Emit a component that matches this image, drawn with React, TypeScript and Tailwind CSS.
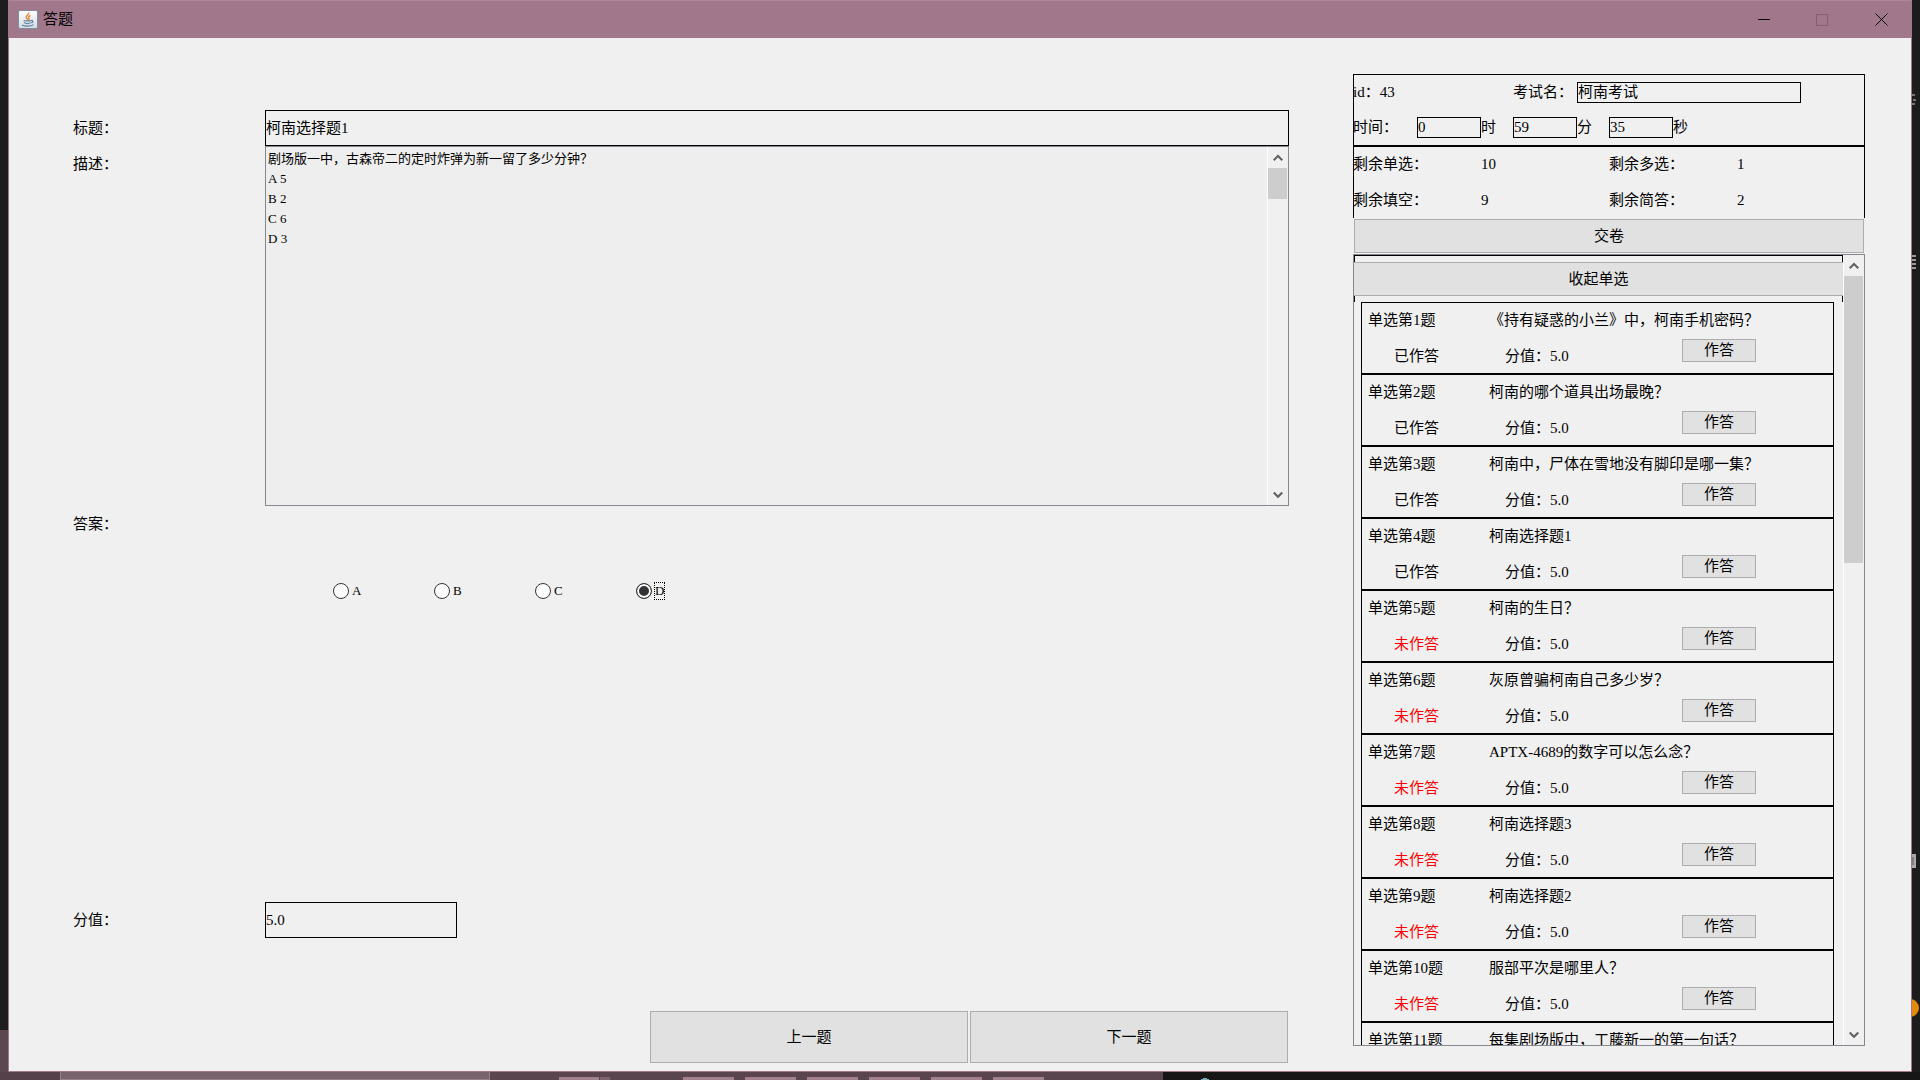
import React, { useState } from 'react';

const questions = [
  { title: '《持有疑惑的小兰》中，柯南手机密码？', done: true },
  { title: '柯南的哪个道具出场最晚？', done: true },
  { title: '柯南中，尸体在雪地没有脚印是哪一集？', done: true },
  { title: '柯南选择题1', done: true },
  { title: '柯南的生日？', done: false },
  { title: '灰原曾骗柯南自己多少岁？', done: false },
  { title: 'APTX-4689的数字可以怎么念？', done: false },
  { title: '柯南选择题3', done: false },
  { title: '柯南选择题2', done: false },
  { title: '服部平次是哪里人？', done: false },
  { title: '每集剧场版中，工藤新一的第一句话？', done: false }
];

const remaining = [
  { label: '剩余单选：', count: 10 },
  { label: '剩余多选：', count: 1 },
  { label: '剩余填空：', count: 9 },
  { label: '剩余简答：', count: 2 }
];

const description = `剧场版一中，古森帝二的定时炸弹为新一留了多少分钟？
A 5
B 2
C 6
D 3`;

const buttonStyle = 'border border-[#adadad] bg-[#e1e1e1]';

const JavaIcon = () => {
  return <svg width="20" height="20" viewBox="0 0 20 20" aria-hidden="true">
      <defs>
        <linearGradient id="cup" x1="0" y1="0" x2="0" y2="1">
          <stop offset="0" stopColor="#ffffff" />
          <stop offset="1" stopColor="#d3dde3" />
        </linearGradient>
      </defs>
      <rect x="0.5" y="0.5" width="19" height="18" rx="1.5" fill="url(#cup)" stroke="#7d8f9d" />
      <path d="M10.6 2.5c1 2-3 3-2.400 5 .3 1 1.300 1.500 1.500 2.300M12.500 5.500c-1.800.9-2.700 1.800-1.500 3 .5.600.1 1.200-.5 1.500" fill="none" stroke="#e8863a" strokeWidth="1.400" />
      <path d="M5.500 10.800h7.500M6 12.800c2 .8 5 .8 6.500 0M4 15c3 1.600 8.500 1.500 11.500-.2M13 10.500c2.300-.5 2.600 1.800.2 2.400" fill="none" stroke="#5f83a3" strokeWidth="1.200" />
    </svg>;
};

const Chevron = ({ down = false }: { down?: boolean }) => {
  return <svg width="10" height="8" viewBox="0 0 10 8" aria-hidden="true">
      <path d={down ? 'M0.700 1.500L5 5.800L9.300 1.500' : 'M0.700 6.300L5 2L9.300 6.300'} fill="none" stroke="#606060" strokeWidth="2" />
    </svg>;
};

const ScrollBar = ({ thumb }: { thumb: string }) => {
  return <div className="flex w-[21px] shrink-0 flex-col items-stretch border-l border-white bg-[#f0f0f0] pr-px">
      <button aria-label="向上滚动" className="flex h-[21px] shrink-0 items-center justify-center">
        <Chevron />
      </button>
      <div className="min-h-0 flex-1">
        <div className={`bg-[#cdcdcd] ${thumb}`} />
      </div>
      <button aria-label="向下滚动" className="flex h-[21px] shrink-0 items-center justify-center">
        <Chevron down />
      </button>
    </div>;
};

const TitleBar = () => {
  return <header className="flex h-[38px] shrink-0 items-center border-t border-[#ab8799] bg-[#a1788b] pl-[9px]">
      <JavaIcon />
      <h1 className="ml-[5px] flex-1 text-[15px]">答题</h1>
      <button aria-label="最小化" className="flex h-full w-[58px] items-center justify-center">
        <svg width="12" height="12"><path d="M0 5.500H12" stroke="#000" /></svg>
      </button>
      <button aria-label="最大化" disabled className="flex h-full w-[58px] items-center justify-center">
        <svg width="12" height="12"><rect x="0.500" y="0.500" width="11" height="11" fill="none" stroke="#855f73" /></svg>
      </button>
      <button aria-label="关闭" className="flex h-full w-[60px] items-center justify-center">
        <svg width="13" height="13"><path d="M0.500 0.500L12.500 12.500M12.500 0.500L0.500 12.500" stroke="#000" fill="none" /></svg>
      </button>
    </header>;
};

const QuestionForm = () => {
  const [answer, setAnswer] = useState('D');
  return <main className="flex min-w-0 flex-1 flex-col pt-[72px] pb-2">
      <div className="flex h-9 shrink-0">
        <label htmlFor="title" className="w-48 shrink-0 leading-9">标题：</label>
        <input id="title" readOnly defaultValue="柯南选择题1" className="min-w-0 flex-1 border border-black outline-none" />
      </div>
      <div className="flex h-[360px] shrink-0">
        <label htmlFor="description" className="w-48 shrink-0 leading-9">描述：</label>
        <div className="flex min-w-0 flex-1 border border-[#828790] bg-[#eeeeee]">
          <textarea id="description" readOnly defaultValue={description} className="min-w-0 flex-1 resize-none overflow-hidden px-0.5 py-0.5 text-[13px] leading-5 outline-none" />
          <ScrollBar thumb="h-[31px]" />
        </div>
      </div>
      <fieldset className="flex min-h-0 flex-1">
        <span className="w-48 shrink-0 leading-9">答案：</span>
        <div className="flex pt-[74px] pl-[68px]">
          {['A', 'B', 'C', 'D'].map(option => <label key={option} className="flex h-[22px] w-[101px] items-center gap-0.5 text-[13px]">
              <input type="radio" name="answer" checked={answer === option} onChange={() => setAnswer(option)} className="size-4 appearance-none rounded-full border border-[#333333] bg-white checked:bg-[#333333] checked:shadow-[inset_0_0_0_2px_white]" />
              <span className={answer === option ? 'border border-dotted border-black leading-4' : 'border border-transparent leading-4'}>{option}</span>
            </label>)}
        </div>
      </fieldset>
      <div className="flex h-9 shrink-0">
        <label htmlFor="score" className="w-48 shrink-0 leading-9">分值：</label>
        <input id="score" readOnly defaultValue="5.0" className="w-48 border border-black outline-none" />
      </div>
      <div className="mt-[73px] flex shrink-0 justify-end gap-0.5 pr-px">
        <button className={`h-[52px] w-[318px] ${buttonStyle}`}>上一题</button>
        <button className={`h-[52px] w-[318px] ${buttonStyle}`}>下一题</button>
      </div>
    </main>;
};

const TimeField = ({ id, value, unit }: { id: string; value: string; unit: string }) => {
  return <>
      <input id={id} readOnly defaultValue={value} className="col-span-2 h-[21px] min-w-0 border border-black outline-none" />
      <label htmlFor={id}>{unit}</label>
    </>;
};

const ExamInfo = () => {
  return <section className="shrink-0">
      <div className="h-[72px] border border-black">
        <div className="-mx-px grid h-[34px] grid-cols-16 items-center whitespace-nowrap">
          <span className="col-span-5">id：43</span>
          <label htmlFor="exam" className="col-span-2">考试名：</label>
          <input id="exam" readOnly defaultValue="柯南考试" className="col-span-7 h-[21px] min-w-0 border border-black outline-none" />
        </div>
        <div className="-mx-px grid h-9 grid-cols-16 items-center whitespace-nowrap">
          <span className="col-span-2">时间：</span>
          <TimeField id="hours" value="0" unit="时" />
          <TimeField id="minutes" value="59" unit="分" />
          <TimeField id="seconds" value="35" unit="秒" />
        </div>
      </div>
      <div className="border-x border-t border-black">
        <dl className="-mx-px grid h-[71px] grid-cols-4 leading-[34px]">
          {remaining.map(item => <React.Fragment key={item.label}>
              <dt>{item.label}</dt>
              <dd>{item.count}</dd>
            </React.Fragment>)}
        </dl>
      </div>
    </section>;
};

const QuestionList = () => {
  return <section className="flex min-h-0 flex-1 border border-[#828790]">
      <div className="min-w-0 flex-1 overflow-hidden">
        <div className="h-[47px] border-x border-t border-black py-1.5">
          <button className="-mx-px block h-[34px] w-[calc(100%+2px)] border-y border-[#adadad] bg-[#e1e1e1]">收起单选</button>
        </div>
        <ul className="mr-[9px] ml-[7px]">
          {questions.map((question, index) => <li key={index} className="h-[72px] border border-black whitespace-nowrap">
              <div className="flex h-[35px] pl-1.5 leading-[35px]">
                <span className="w-[121px]">单选第{index + 1}题</span>
                <span>{question.title}</span>
              </div>
              <div className="flex h-[35px] pl-8 leading-9">
                <span className={question.done ? 'w-[111px]' : 'w-[111px] text-[#ff0000]'}>{question.done ? '已作答' : '未作答'}</span>
                <span className="w-[177px]">分值：5.0</span>
                <button className={`mt-px flex h-[23px] w-[74px] justify-center leading-5 ${buttonStyle}`}>作答</button>
              </div>
            </li>)}
        </ul>
      </div>
      <ScrollBar thumb="h-[287px]" />
    </section>;
};

const App = () => {
  return <div className="relative flex h-screen flex-col overflow-hidden bg-[#1c1c1c] font-['Liberation_Serif','Noto_Sans_CJK_SC',serif] text-[15px] text-black">
      <div className="flex min-h-0 flex-1">
        <div className="flex w-2 shrink-0 flex-col">
          <div className="flex-1 bg-[#1d1d1d]" />
          <div className="h-[42px] bg-[#5c4750]" />
        </div>
        <div className="flex min-w-0 flex-1 flex-col border-x border-b border-[#a1788b] bg-[#f0f0f0]">
          <TitleBar />
          <div className="flex min-h-0 flex-1 gap-16 pr-[46px] pl-16">
            <QuestionForm />
            <aside className="flex w-[512px] shrink-0 flex-col pt-9 pb-[25px]">
              <ExamInfo />
              <button className={`m-px h-[34px] shrink-0 ${buttonStyle}`}>交卷</button>
              <QuestionList />
            </aside>
          </div>
        </div>
        {/* desktop icons peeking out beside the window */}
        <svg className="w-2 shrink-0" width="8" height="1072" aria-hidden="true">
          <path d="M0 95h3M1 100h3M0 104h3" stroke="#777" strokeWidth="2" />
          <path d="M0 256h4M0 260h4M0 264h4M0 268h4" stroke="#999" strokeWidth="2" />
          <rect y="854" width="4" height="14" fill="#aaa" />
          <path d="M1 857v8" stroke="#555" />
          <circle cx="-2" cy="1008" r="9" fill="#e48a08" />
        </svg>
      </div>
      <div className="flex h-2 shrink-0 bg-[#161616]">
        <div className="w-[60px] bg-[#54414a]" />
        <div className="w-[430px] border-x border-b border-[#94808a] bg-[#78636c]" />
        <div className="flex w-[673px] items-end bg-[#5a444e]">
          <div className="ml-[69px] h-[3px] w-10 bg-[#a3828f]" />
          <div className="ml-px h-[3px] w-2.5 bg-[#806570]" />
          <div className="ml-[73px] flex gap-[11px]">
            {[1, 2, 3, 4, 5, 6].map(app => <div key={app} className="h-[3px] w-[51px] bg-[#a3828f]" />)}
          </div>
        </div>
        <svg className="mt-[6px] ml-[38px]" width="8" height="2" aria-hidden="true">
          <path d="M2 0h4v1h2v1H0V1h2z" fill="#7fb0bf" />
        </svg>
      </div>
    </div>;
};

export default App;
